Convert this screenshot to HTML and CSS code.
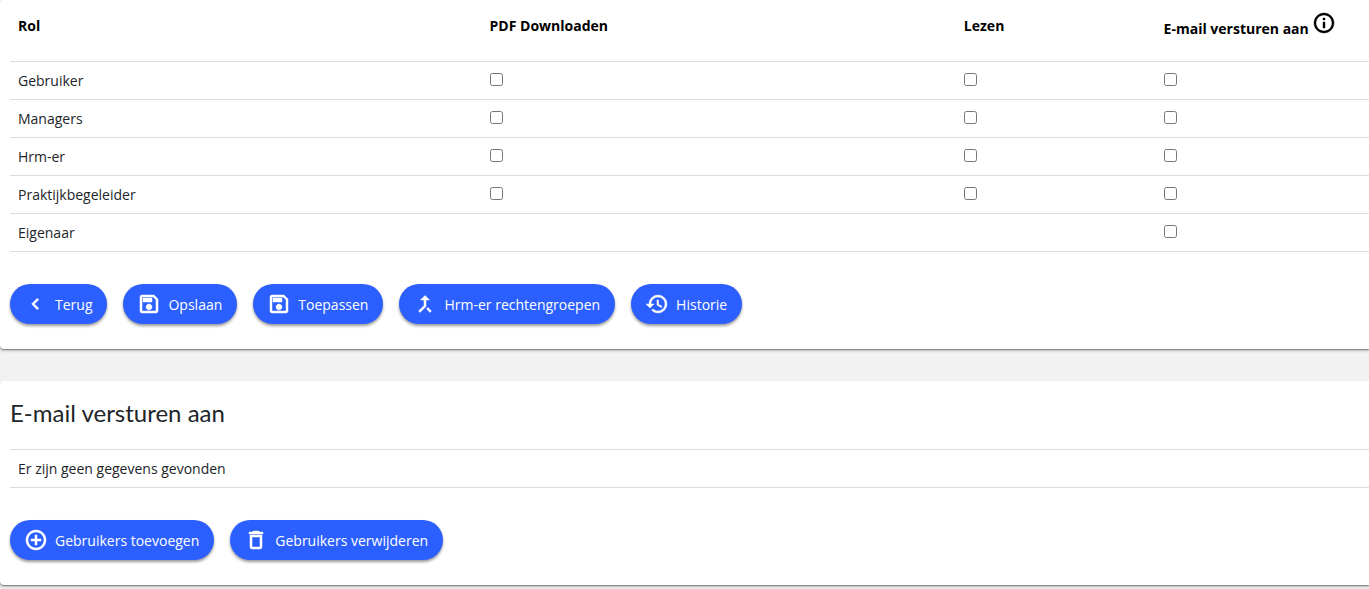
FILE: index.html
```html
<!DOCTYPE html>
<html lang="nl">
<head>
  <meta charset="UTF-8">
  <title>Rechten</title>
  <link rel="stylesheet" href="styles.css">
</head>
<body>

  <section class="card">
    <table class="roles">
      <thead>
        <tr>
          <th class="col-role" id="rol">Rol</th>
          <th class="col-pdf" id="pdf">PDF Downloaden</th>
          <th class="col-read" id="lezen">Lezen</th>
          <th class="col-mail" id="mail">E-mail versturen aan
            <svg class="info" viewBox="0 0 24 24"><path d="M11 7h2v2h-2zm0 4h2v6h-2zm1-9C6.48 2 2 6.48 2 12s4.48 10 10 10 10-4.48 10-10S17.52 2 12 2zm0 18c-4.41 0-8-3.59-8-8s3.59-8 8-8 8 3.59 8 8-3.59 8-8 8z"/></svg>
          </th>
        </tr>
      </thead>
      <tbody>
        <tr>
          <td id="gebruiker">Gebruiker</td>
          <td><input type="checkbox" aria-labelledby="gebruiker pdf"></td>
          <td><input type="checkbox" aria-labelledby="gebruiker lezen"></td>
          <td><input type="checkbox" aria-labelledby="gebruiker mail"></td>
        </tr>
        <tr>
          <td id="managers">Managers</td>
          <td><input type="checkbox" aria-labelledby="managers pdf"></td>
          <td><input type="checkbox" aria-labelledby="managers lezen"></td>
          <td><input type="checkbox" aria-labelledby="managers mail"></td>
        </tr>
        <tr>
          <td id="hrm">Hrm-er</td>
          <td><input type="checkbox" aria-labelledby="hrm pdf"></td>
          <td><input type="checkbox" aria-labelledby="hrm lezen"></td>
          <td><input type="checkbox" aria-labelledby="hrm mail"></td>
        </tr>
        <tr>
          <td id="begeleider">Praktijkbegeleider</td>
          <td><input type="checkbox" aria-labelledby="begeleider pdf"></td>
          <td><input type="checkbox" aria-labelledby="begeleider lezen"></td>
          <td><input type="checkbox" aria-labelledby="begeleider mail"></td>
        </tr>
        <tr>
          <td id="eigenaar">Eigenaar</td>
          <td></td>
          <td></td>
          <td><input type="checkbox" aria-labelledby="eigenaar mail"></td>
        </tr>
      </tbody>
    </table>

    <div class="buttons">
      <button type="button">
        <svg viewBox="0 0 24 24"><path d="M14.7 7.7 13.3 6.3 7.6 12l5.7 5.7 1.4-1.4-4.3-4.3z"/></svg>
        Terug
      </button>
      <button type="button">
        <svg viewBox="0 0 24 24"><path d="M17 3H5a2 2 0 0 0-2 2v14a2 2 0 0 0 2 2h14c1.1 0 2-.9 2-2V7l-4-4zm2 16H5V5h11.17L19 7.83V19zm-7-7c-1.66 0-3 1.34-3 3s1.34 3 3 3 3-1.34 3-3-1.34-3-3-3zM6 6h9v4H6z"/></svg>
        Opslaan
      </button>
      <button type="button">
        <svg viewBox="0 0 24 24"><path d="M17 3H5a2 2 0 0 0-2 2v14a2 2 0 0 0 2 2h14c1.1 0 2-.9 2-2V7l-4-4zm2 16H5V5h11.17L19 7.83V19zm-7-7c-1.66 0-3 1.34-3 3s1.34 3 3 3 3-1.34 3-3-1.34-3-3-3zM6 6h9v4H6z"/></svg>
        Toepassen
      </button>
      <button type="button">
        <svg viewBox="0 0 24 24"><path d="M17 20.41 18.41 19 15 15.59 13.59 17 17 20.41zM7.5 8H11v5.59L5.59 19 7 20.41l6-6V8h3.5L12 3.5 7.5 8z"/></svg>
        Hrm-er rechtengroepen
      </button>
      <button type="button">
        <svg viewBox="0 0 24 24"><path d="M13 3a9 9 0 0 0-9 9H1l3.89 3.89.07.14L9 12H6c0-3.87 3.13-7 7-7s7 3.13 7 7-3.13 7-7 7c-1.93 0-3.68-.79-4.94-2.06l-1.42 1.42A8.95 8.95 0 0 0 13 21a9 9 0 0 0 0-18zm-1 5v5l4.28 2.54.72-1.21-3.5-2.08V8H12z"/></svg>
        Historie
      </button>
    </div>
  </section>

  <section class="card">
    <h2>E-mail versturen aan</h2>
    <table class="users">
      <tbody>
        <tr>
          <td>Er zijn geen gegevens gevonden</td>
        </tr>
      </tbody>
    </table>

    <div class="buttons">
      <button type="button">
        <svg viewBox="0 0 24 24"><path d="M13 7h-2v4H7v2h4v4h2v-4h4v-2h-4V7zm-1-5C6.48 2 2 6.48 2 12s4.48 10 10 10 10-4.48 10-10S17.52 2 12 2zm0 18c-4.41 0-8-3.59-8-8s3.59-8 8-8 8 3.59 8 8-3.59 8-8 8z"/></svg>
        Gebruikers toevoegen
      </button>
      <button type="button">
        <svg viewBox="0 0 24 24"><path d="M6 19c0 1.1.9 2 2 2h8c1.1 0 2-.9 2-2V7H6v12zM8 9h8v10H8V9zm7.5-5-1-1h-5l-1 1H5v2h14V4h-3.5z"/></svg>
        Gebruikers verwijderen
      </button>
    </div>
  </section>

</body>
</html>
```
FILE: styles.css
```css
body {
  min-height: 100vh;
  margin: 0;
  background-color: #f2f2f2;
  color: #212529;
  font-family: "Open Sans", sans-serif;
  font-size: 14px;
  line-height: 21px;
}

.card {
  padding: 0 0 25px 10px;
  margin-bottom: 32px;
  background: #fff;
  border-radius: 4px 0 0 4px;
  box-shadow: 0 1px 1px rgba(0, 0, 0, 0.35), 0 2px 3px rgba(0, 0, 0, 0.2);
}

.card:last-child {
  margin-bottom: 0;
}

h2 {
  margin: 0;
  padding: 16px 0 20px;
  font-family: Lato, sans-serif;
  font-size: 24px;
  font-weight: 400;
  line-height: 32px;
}

table {
  width: 100%;
  border-collapse: separate;
  border-spacing: 0;
  table-layout: fixed;
}

th, td {
  box-sizing: border-box;
  padding: 8px;
  text-align: left;
  vertical-align: top;
  border-bottom: 1px solid #dcdddf;
}

th {
  height: 62px;
  padding-top: 15px;
  color: #000;
  font-weight: 700;
  white-space: nowrap;
}

td {
  height: 38px;
}

.users {
  border-top: 1px solid #dcdddf;
}

.col-role {
  width: 34.7%;
}

.col-pdf {
  width: 34.9%;
}

.col-read {
  width: 14.7%;
}

.info {
  width: 24px;
  height: 24px;
  margin-top: -4px;
  vertical-align: -1px;
  stroke: #000;
  stroke-width: 0.4;
}

input {
  display: block;
  width: 13px;
  height: 13px;
  margin: 3px 0 0;
}

.buttons {
  display: flex;
  flex-wrap: wrap;
  gap: 16px;
  margin-top: 32px;
}

button {
  display: flex;
  align-items: center;
  gap: 7px;
  height: 40px;
  padding: 0 15px 0 14px;
  border: none;
  border-radius: 20px;
  background-color: #2c5fff;
  color: #fff;
  font-family: inherit;
  font-size: 14px;
  box-shadow: 0 2px 3px rgba(0, 0, 0, 0.4);
  cursor: pointer;
}

button svg {
  width: 24px;
  height: 24px;
  fill: #fff;
  stroke: #fff;
  stroke-width: 0.5;
}
```
